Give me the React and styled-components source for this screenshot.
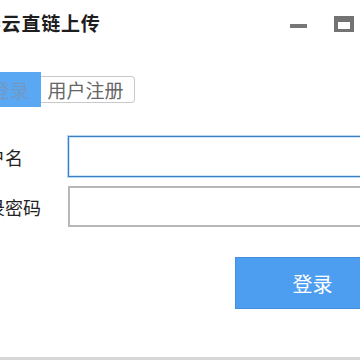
import React, {useState} from 'react'
import styled, {createGlobalStyle} from 'styled-components'

const GlobalStyle = createGlobalStyle`
    html, body {
        margin: 0;
        padding: 0;
        background: #ffffff;
        overflow: hidden;
    }
    body {
        font-family: "Noto Sans CJK SC", "Noto Sans", sans-serif;
    }
`

// the window is wider than the shot, its left edge is cut off
const Window = styled.div`
    margin-left: -40px;
    width: 470px;
    height: 360px;
    box-sizing: border-box;
    background: #fff;
    border-bottom: 3px solid #d6d6d6;
    display: flex;
    flex-direction: column;
`

const TitleBar = styled.div`
    height: 44px;
    display: flex;
    align-items: center;
    padding-left: 2px;
    padding-top: 1px;
    box-sizing: border-box;
`

const Title = styled.div`
    font-size: 19px;
    font-weight: 700;
    color: #1e1e1e;
    letter-spacing: 0.8px;
    flex: 1;
`

const Controls = styled.div`
    display: flex;
    align-items: center;
    gap: 26px;
    width: 140px;
    padding-top: 2px;
`

const Ctrl = styled.button`
    border: none;
    background: none;
    padding: 0;
    display: flex;
    cursor: pointer;
`

const Body = styled.div`
    padding-left: 9px;
    padding-top: 28px;
    display: flex;
    flex-direction: column;
`

const TabRow = styled.div`
    display: flex;
    align-items: center;
    margin-left: 8px;
    height: 35px;
`

const Tab = styled.button`
    font-family: inherit;
    font-size: 19px;
    cursor: pointer;
    box-sizing: border-box;
    display: flex;
    align-items: center;
    justify-content: center;
    padding: 0;
    ${p => p.$active ? `
        height: 35px;
        width: 64px;
        padding-left: 2px;
        background: #5aa8f4;
        color: #7299c4;
        border: none;
    ` : `
        height: 27px;
        width: 94px;
        padding-right: 4px;
        background: #fff;
        color: #666;
        border: 1px solid #c9c9c9;
        border-left: none;
        border-radius: 0 4px 4px 0;
    `}
`

const Form = styled.div`
    margin-top: 29px;
    display: flex;
    flex-direction: column;
    gap: 9px;
`

const Row = styled.div`
    display: flex;
    align-items: center;
`

const Label = styled.label`
    width: 99px;
    font-size: 18px;
    color: #222;
`

const Input = styled.input`
    width: 340px;
    height: 41px;
    box-sizing: border-box;
    font-family: inherit;
    font-size: 16px;
    outline: none;
    padding: 0 8px;
    background: #fff;
    border: ${p => p.$focus ? '1px solid #3d7fc0' : '2px solid #b7b7b7'};
    box-shadow: ${p => p.$focus ? '0 0 0 1px #b4d8f6, inset 0 0 0 1px #cfe7fb' : 'none'};
`

const Actions = styled.div`
    display: flex;
    margin-top: 30px;
    padding-left: 266px;
`

const LoginButton = styled.button`
    width: 155px;
    height: 52px;
    background: #4d9ef1;
    border: 1px solid #4590dd;
    color: #fff;
    font-family: inherit;
    font-size: 20px;
    cursor: pointer;
`

export default function App() {
    const [tab, setTab] = useState(0)

    return (
        <>
            <GlobalStyle />
            <Window>
                <TitleBar>
                    <Title>蓝奏云直链上传</Title>
                    <Controls>
                        <Ctrl aria-label="minimize">
                            <svg width="18" height="12" viewBox="0 0 18 12">
                                <rect x="0" y="6" width="17" height="4" fill="#777" />
                            </svg>
                        </Ctrl>
                        <Ctrl aria-label="maximize">
                            <svg width="20" height="16" viewBox="0 0 20 16">
                                <rect x="0" y="0" width="20" height="16" fill="#737373" />
                                <rect x="4" y="6" width="12" height="7" fill="#fff" />
                            </svg>
                        </Ctrl>
                    </Controls>
                </TitleBar>
                <Body>
                    <TabRow>
                        <Tab $active={tab === 0} onClick={() => setTab(0)}>登录</Tab>
                        <Tab $active={tab === 1} onClick={() => setTab(1)}>用户注册</Tab>
                    </TabRow>
                    <Form>
                        <Row>
                            <Label>用户名</Label>
                            <Input $focus />
                        </Row>
                        <Row>
                            <Label>登录密码</Label>
                            <Input type="password" />
                        </Row>
                    </Form>
                    <Actions>
                        <LoginButton>登录</LoginButton>
                    </Actions>
                </Body>
            </Window>
        </>
    )
}
